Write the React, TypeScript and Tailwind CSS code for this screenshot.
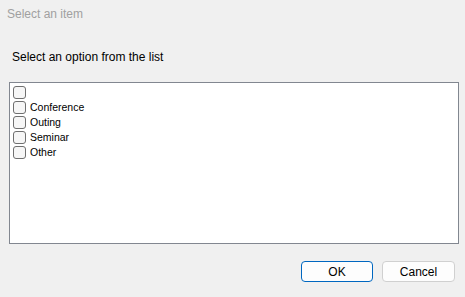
import { useState } from 'react'

const items = ['', 'Conference', 'Outing', 'Seminar', 'Other']

const App = () => {
  const [checked, setChecked] = useState<boolean[]>(items.map(() => false))

  const toggle = (i: number) =>
    setChecked((prev) => prev.map((v, j) => (j === i ? !v : v)))

  return (
    <div className="h-[297px] w-[465px] overflow-hidden bg-[#f0f0f0] font-['Liberation_Sans',sans-serif]">
      <div className="px-[7px] pt-[5px] text-[12px] leading-[18px] text-[#a0a0a0]">Select an item</div>
      <div className="mt-[26px] pl-[12px] text-[12px] leading-[16px] text-black">
        Select an option from the list
      </div>
      <div className="ml-[9px] mt-[17px] h-[162px] w-[450px] border border-[#828790] bg-white pl-[2px] pt-[2px]">
        {items.map((label, i) => (
          <div
            key={`item-${i}`}
            className="flex h-[15px] cursor-default items-center text-[10.5px] text-black"
            onClick={() => toggle(i)}
          >
            <div className="ml-[1px] grid h-[13px] w-[13px] place-items-center rounded-[3px] border border-[#6f6f6f] bg-[#f6f6f6]">
              {checked[i] && (
                <svg width="9" height="9" viewBox="0 0 9 9">
                  <path d="M1 4.5 L3.5 7 L8 1.5" fill="none" stroke="#000" strokeWidth="1.3" />
                </svg>
              )}
            </div>
            <span className="ml-[4px]">{label}</span>
          </div>
        ))}
      </div>
      <div className="mr-[10px] mt-[17px] flex justify-end gap-[9px] text-[12px] text-black">
        <button className="h-[21px] w-[72px] rounded-[4px] border border-[#0067c0] bg-[#fdfdfd] leading-none">
          OK
        </button>
        <button className="h-[21px] w-[73px] rounded-[4px] border border-[#d0d0d0] bg-[#fdfdfd] leading-none">
          Cancel
        </button>
      </div>
    </div>
  )
}

export default App
